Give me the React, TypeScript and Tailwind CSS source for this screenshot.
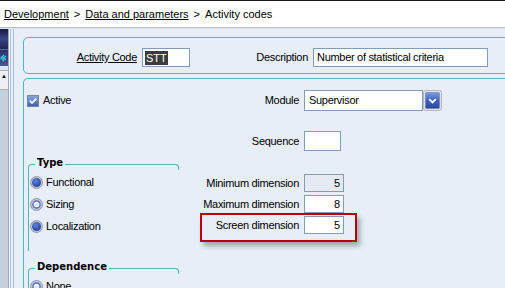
import React from 'react';

const sans = { fontFamily: '"Liberation Sans", Arial, sans-serif' };
const bold = { fontFamily: '"DejaVu Sans", Verdana, sans-serif' };

const Checkbox: React.FC = () => (
  <svg width="12" height="12" viewBox="0 0 12 12">
    <defs>
      <linearGradient id="cbg" x1="0" y1="0" x2="0" y2="1">
        <stop offset="0" stopColor="#8ea6da" />
        <stop offset="1" stopColor="#3d5cab" />
      </linearGradient>
    </defs>
    <rect x="0.5" y="0.5" width="11" height="11" fill="url(#cbg)" stroke="#7486a6" />
    <path d="M2.8 5.6 L5 8 L9.3 3.6" stroke="#fff" strokeWidth="1.7" fill="none" />
  </svg>
);

const Radio: React.FC<{ hollow?: boolean }> = ({ hollow }) => (
  <svg width="13" height="13" viewBox="0 0 13 13">
    <defs>
      <radialGradient id="rb" cx="0.4" cy="0.35" r="0.7">
        <stop offset="0" stopColor="#5f86e0" />
        <stop offset="1" stopColor="#1f3f9c" />
      </radialGradient>
    </defs>
    <circle cx="6.5" cy="6.5" r="6" fill="#c6cbd4" stroke="#8f96a3" strokeWidth="1" />
    {hollow ? (
      <>
        <circle cx="6.5" cy="6.5" r="4.3" fill="#4d74d0" />
        <circle cx="6.5" cy="6.5" r="2.8" fill="#ffffff" />
        <ellipse cx="6.5" cy="6.8" rx="1.8" ry="1.2" fill="#cfe0f8" />
      </>
    ) : (
      <circle cx="6.5" cy="6.5" r="4.5" fill="url(#rb)" />
    )}
  </svg>
);

const DropButton: React.FC = () => (
  <svg width="19" height="21" viewBox="0 0 19 21">
    <defs>
      <linearGradient id="db" x1="0" y1="0" x2="0" y2="1">
        <stop offset="0" stopColor="#7b9de2" />
        <stop offset="0.5" stopColor="#3d62c0" />
        <stop offset="1" stopColor="#2a4a9e" />
      </linearGradient>
    </defs>
    <rect x="0.5" y="0.5" width="18" height="20" rx="2" fill="#dfe2e8" stroke="#b4b8c0" />
    <rect x="2.5" y="2.5" width="14" height="16" rx="1" fill="url(#db)" stroke="#6d7fa8" strokeWidth="0.6" />
    <path d="M6.2 9.2 L9.5 12.4 L12.8 9.2" stroke="#fff" strokeWidth="1.8" fill="none" />
  </svg>
);

const GroupHeader: React.FC<{ title: string }> = ({ title }) => (
  <div className="flex h-[13px]">
    <div className="mt-[7px] h-[6px] w-[7px] rounded-tl-[4px] border-l border-t border-[#56b5b8]" />
    <span className="px-[2px] text-[10px] font-bold leading-[12px] text-black" style={bold}>
      {title}
    </span>
    <div className="mt-[7px] h-[6px] flex-1 rounded-tr-[4px] border-r border-t border-[#56b5b8]" />
  </div>
);

const RadioRow: React.FC<{ label: string; hollow?: boolean }> = ({ label, hollow }) => (
  <div className="flex h-[22px] items-center gap-[3px] pl-px">
    <Radio hollow={hollow} />
    <span className="text-[11px] tracking-[-0.3px]">{label}</span>
  </div>
);

const DimRow: React.FC<{ label: string; value: string; disabled?: boolean }> = ({ label, value, disabled }) => (
  <div className="flex h-[18px] items-center">
    <span className="w-[99px] text-right text-[11px] tracking-[-0.3px]">{label}</span>
    <div
      className={`ml-[5px] flex h-[18px] w-[40px] items-center justify-end border border-[#7f9db9] pr-[3px] text-[11px] ${
        disabled ? 'bg-[#e6ebf3]' : 'bg-white'
      }`}
    >
      {value}
    </div>
  </div>
);

export default function App() {
  return (
    <div className="h-[288px] w-[505px] overflow-hidden bg-white text-black" style={sans}>
      <div className="h-px bg-[#1a1a1a]" />
      <div className="flex h-[26px] items-center gap-[5px] pl-[4px] text-[11px]">
        <span className="underline">Development</span>
        <span>&gt;</span>
        <span className="underline">Data and parameters</span>
        <span>&gt;</span>
        <span>Activity codes</span>
      </div>
      <div className="h-px bg-[#bcbcbc]" />
      <div className="h-px bg-[#dfe6ef]" />

      <div className="flex h-[259px]">
        {/* side rail */}
        <div className="flex w-[15px]">
          <div className="flex w-[9px] flex-col border-r border-[#9aa6b6] bg-[#c5d0dc]">
            <div className="h-[20px] bg-gradient-to-b from-[#151b45] via-[#3a4580] to-[#1e2658]" />
            <div className="relative flex h-[17px] items-center border-t border-[#5a6aa0] bg-gradient-to-b from-[#2a3468] to-[#4a5890]">
              <svg width="6" height="8" viewBox="0 0 6 8">
                <path d="M4 1 L1 4 L4 7 M6 2 L3.5 4 L6 6" stroke="#3ad0f0" strokeWidth="1.3" fill="none" />
              </svg>
            </div>
            <div className="h-[4px] bg-[#dce6f4]" />
            <div className="flex h-[20px] items-start border-y border-[#a8b2c0] bg-[#eceff3] pl-px pt-[2px] text-[6px] leading-none">
              ▲
            </div>
          </div>
          <div className="w-px bg-white" />
          <div className="w-px bg-[#a9bedc]" />
          <div className="w-[2px] bg-[#e7eef8]" />
          <div className="w-px bg-[#a9bedc]" />
          <div className="w-px bg-[#e7eef8]" />
        </div>

        {/* content */}
        <div className="flex-1 bg-[#e7eef8] pl-[8px] pt-[8px]">
          <div className="flex h-[37px] w-[520px] items-start rounded-[5px] border border-[#56b5b8] pt-[10px]">
            <span className="w-[113px] text-right text-[11px] leading-[19px] tracking-[-0.3px] underline">
              Activity Code
            </span>
            <div className="ml-[5px] flex h-[19px] w-[48px] items-center border border-[#7f9db9] bg-white pl-[2px] text-[11px]">
              <span className="bg-[#3c3c3c] px-px leading-[14px] text-white">STT</span>
            </div>
            <span className="w-[118px] text-right text-[11px] leading-[19px] tracking-[-0.3px]">Description</span>
            <div className="ml-[5px] flex h-[19px] w-[175px] items-center border border-[#7f9db9] bg-white pl-[3px] text-[11px] tracking-[-0.3px]">
              Number of statistical criteria
            </div>
          </div>

          <div className="mt-[4px] h-[240px] w-[520px] rounded-t-[5px] border-x border-t border-[#56b5b8]">
            <div className="mt-[11px] flex h-[21px] items-center">
              <div className="flex w-[176px] items-center gap-[4px] pl-[3px]">
                <Checkbox />
                <span className="text-[11px] tracking-[-0.3px]">Active</span>
              </div>
              <span className="w-[99px] text-right text-[11px] tracking-[-0.3px]">Module</span>
              <div className="ml-[5px] flex h-[21px] w-[119px] items-center border border-[#7f9db9] bg-white pl-[4px] text-[11px] tracking-[-0.3px]">
                Supervisor
              </div>
              <DropButton />
            </div>

            <div className="mt-[20px] flex h-[20px] items-center">
              <div className="w-[176px]" />
              <span className="w-[99px] text-right text-[11px] tracking-[-0.3px]">Sequence</span>
              <div className="ml-[5px] h-[20px] w-[37px] border border-[#7f9db9] bg-white" />
            </div>

            <div className="mt-[6px] flex">
              <div className="ml-[4px] w-[151px]">
                <GroupHeader title="Type" />
                <div className="h-[81px] border-l border-[#56b5b8] pt-px">
                  <RadioRow label="Functional" />
                  <RadioRow label="Sizing" hollow />
                  <RadioRow label="Localization" />
                </div>
                <div className="mt-[10px]">
                  <GroupHeader title="Dependence" />
                  <div className="h-[40px] border-l border-[#56b5b8] pt-px">
                    <RadioRow label="None" hollow />
                  </div>
                </div>
              </div>

              <div className="ml-[21px] mt-[17px] flex flex-col gap-[3px]">
                <DimRow label="Minimum dimension" value="5" disabled />
                <DimRow label="Maximum dimension" value="8" />
                <div className="relative">
                  <DimRow label="Screen dimension" value="5" />
                  <div className="absolute -top-[3px] left-0 h-[29px] w-[157px] border-2 border-[#c00000] shadow-[3px_4px_5px_rgba(0,0,0,0.3)]" />
                </div>
              </div>
            </div>
          </div>
        </div>
      </div>
    </div>
  );
}
